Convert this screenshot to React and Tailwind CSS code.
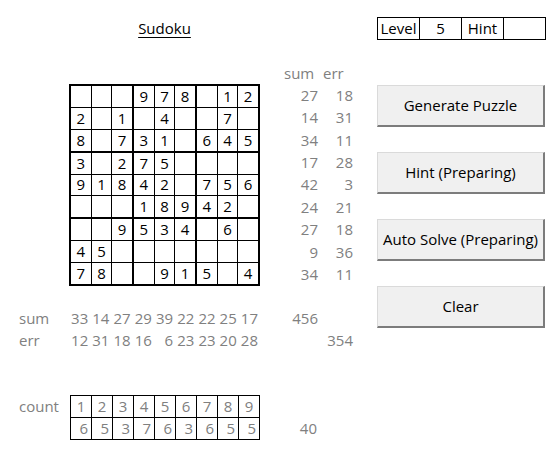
import React from "react";

const G = [
  [0, 0, 0, 9, 7, 8, 0, 1, 2],
  [2, 0, 1, 0, 4, 0, 0, 7, 0],
  [8, 0, 7, 3, 1, 0, 6, 4, 5],
  [3, 0, 2, 7, 5, 0, 0, 0, 0],
  [9, 1, 8, 4, 2, 0, 7, 5, 6],
  [0, 0, 0, 1, 8, 9, 4, 2, 0],
  [0, 0, 9, 5, 3, 4, 0, 6, 0],
  [4, 5, 0, 0, 0, 0, 0, 0, 0],
  [7, 8, 0, 0, 9, 1, 5, 0, 4],
];
const rowSum = [27, 14, 34, 17, 42, 24, 27, 9, 34];
const rowErr = [18, 31, 11, 28, 3, 21, 18, 36, 11];
const colSum = [33, 14, 27, 29, 39, 22, 22, 25, 17];
const colErr = [12, 31, 18, 16, 6, 23, 23, 20, 28];
const counts = [6, 5, 3, 7, 6, 3, 6, 5, 5];

function Button({ children }) {
  return (
    <div className="h-[42px] w-[168px] bg-[#f0f0f0] border-t border-l border-[#dadada] border-b-2 border-r-2 border-b-[#7c7c7c] border-r-[#7c7c7c] flex items-center justify-center text-black">
      {children}
    </div>
  );
}

export default function App() {
  return (
    <div className="w-[560px] h-[454px] bg-white font-['Open_Sans',sans-serif] text-[15px] leading-none text-black flex overflow-hidden">
      {/* Left area */}
      <div className="w-[377px] flex flex-col pt-[17px]">
        <div className="h-[22px] flex">
          <div className="w-[69px]" />
          <div className="w-[191px] flex items-center justify-center">
            <span className="underline underline-offset-[3px]">Sudoku</span>
          </div>
        </div>
        {/* header sum/err */}
        <div className="mt-[23px] h-[22px] flex items-center text-[#808080]">
          <div className="w-[284px]" />
          <div className="w-[39px]">sum</div>
          <div>err</div>
        </div>
        {/* main */}
        <div className="flex">
          <div className="w-[69px]" />
          <div className="w-[191px] h-[202px] bg-black p-[2px] grid grid-cols-3 grid-rows-3 gap-[2px]">
            {[0, 1, 2].map((br) =>
              [0, 1, 2].map((bc) => (
                <div key={`${br}-${bc}`} className="bg-black grid grid-cols-3 grid-rows-3 gap-px">
                  {[0, 1, 2].map((i) =>
                    [0, 1, 2].map((j) => {
                      const v = G[br * 3 + i][bc * 3 + j];
                      return (
                        <div key={`${i}-${j}`} className="bg-white flex items-center justify-center">
                          {v ? v : ""}
                        </div>
                      );
                    })
                  )}
                </div>
              ))
            )}
          </div>
          <div className="w-[21px]" />
          <div className="w-[40px] h-[202px] grid grid-rows-9 text-[#808080]">
            {rowSum.map((s, i) => (
              <div key={i} className="flex items-center justify-end pr-[3px]">{s}</div>
            ))}
          </div>
          <div className="w-[35px] h-[202px] grid grid-rows-9 text-[#808080]">
            {rowErr.map((s, i) => (
              <div key={i} className="flex items-center justify-end pr-[3px]">{s}</div>
            ))}
          </div>
        </div>
        {/* bottom sum/err */}
        <div className="mt-[21px] h-[22px] flex items-center text-[#808080]">
          <div className="w-[69px] pl-[19px]">sum</div>
          <div className="w-[191px] grid grid-cols-9">
            {colSum.map((s, i) => (
              <div key={i} className="text-right pr-[2px]">{s}</div>
            ))}
          </div>
          <div className="w-[21px]" />
          <div className="w-[40px] text-right pr-[3px]">456</div>
        </div>
        <div className="h-[22px] flex items-center text-[#808080]">
          <div className="w-[69px] pl-[19px]">err</div>
          <div className="w-[191px] grid grid-cols-9">
            {colErr.map((s, i) => (
              <div key={i} className="text-right pr-[2px]">{s}</div>
            ))}
          </div>
          <div className="w-[61px]" />
          <div className="w-[35px] text-right pr-[3px]">354</div>
        </div>
        {/* count */}
        <div className="mt-[44px] flex text-[#808080]">
          <div className="w-[70px] pl-[19px] h-[22px] flex items-center">count</div>
          <div className="w-[190px] h-[45px] bg-black p-px grid grid-cols-9 grid-rows-2 gap-px">
            {[1, 2, 3, 4, 5, 6, 7, 8, 9].map((n) => (
              <div key={n} className="bg-white flex items-center justify-center">{n}</div>
            ))}
            {counts.map((n, i) => (
              <div key={i} className="bg-white flex items-center justify-end pr-[3px]">{n}</div>
            ))}
          </div>
          <div className="w-[20px]" />
          <div className="w-[40px] flex flex-col">
            <div className="h-[22px]" />
            <div className="h-[22px] flex items-center justify-end pr-[3px]">40</div>
          </div>
        </div>
      </div>
      {/* Right area */}
      <div className="w-[169px] flex flex-col pt-[17px]">
        <div className="w-[169px] h-[23px] bg-black p-px grid grid-cols-4 gap-px">
          <div className="bg-white flex items-center justify-center">Level</div>
          <div className="bg-white flex items-center justify-center">5</div>
          <div className="bg-white flex items-center justify-center">Hint</div>
          <div className="bg-white" />
        </div>
        <div className="mt-[45px] flex flex-col gap-[25px]">
          <Button>Generate Puzzle</Button>
          <Button>Hint (Preparing)</Button>
          <Button>Auto Solve (Preparing)</Button>
          <Button>Clear</Button>
        </div>
      </div>
    </div>
  );
}
